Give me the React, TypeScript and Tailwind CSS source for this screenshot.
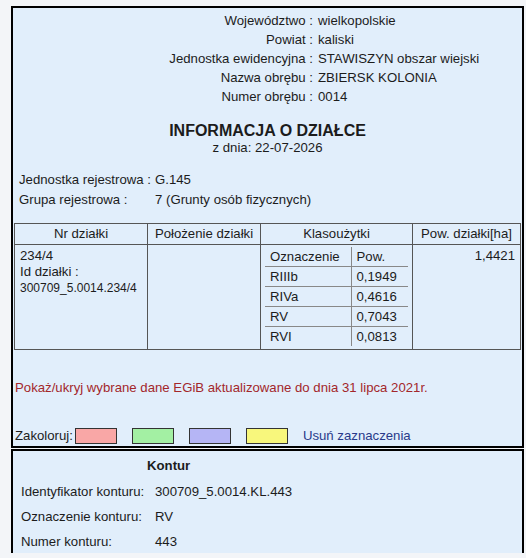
// Karta informacyjna działki ewidencyjnej z tabelą klasoużytków i konturem.
const header: [string, string][] = [
  ['Województwo', 'wielkopolskie'],
  ['Powiat', 'kaliski'],
  ['Jednostka ewidencyjna', 'STAWISZYN obszar wiejski'],
  ['Nazwa obrębu', 'ZBIERSK KOLONIA'],
  ['Numer obrębu', '0014'],
]

const klasouzytki: [string, string][] = [
  ['RIIIb', '0,1949'],
  ['RIVa', '0,4616'],
  ['RV', '0,7043'],
  ['RVI', '0,0813'],
]

const swatches = ['bg-[#f9a7a6]', 'bg-[#a3f0a3]', 'bg-[#b5b5f5]', 'bg-[#f8f77c]']

const kontur: [string, string][] = [
  ['Identyfikator konturu:', '300709_5.0014.KL.443'],
  ['Oznaczenie konturu:', 'RV'],
  ['Numer konturu:', '443'],
]

export default function App() {
  return (
    <div className="min-h-[558px] bg-[#f3f5f8] pl-[11px] pt-[6px] font-['Liberation_Sans',Arial,sans-serif] text-[13.2px] text-[#1c1c1c]">
      <section className="w-[513px] border-2 border-black bg-[#e1eefb] pb-[1px]">
        <div className="grid grid-cols-[300px_auto] gap-x-[5px] pt-[3px] leading-[19px]">
          {header.map(([label, value]) => (
            <div key={label} className="contents">
              <span className="text-right">{label} :</span>
              <span>{value}</span>
            </div>
          ))}
        </div>

        <div className="mt-[15px] text-center">
          <h2 className="text-[16px] font-bold leading-[19px]">INFORMACJA O DZIAŁCE</h2>
          <div className="leading-[16px]">z dnia: 22-07-2026</div>
        </div>

        <div className="mt-[14px] grid grid-cols-[136px_auto] pl-[6px] leading-[20px]">
          <span>Jednostka rejestrowa :</span>
          <span>G.145</span>
          <span>Grupa rejestrowa :</span>
          <span>7 (Grunty osób fizycznych)</span>
        </div>

        <table className="mt-[13px] ml-[1px] w-[507px] border-collapse border border-[#444] leading-[16px]">
          <thead>
            <tr className="h-[21px]">
              <th className="w-[133px] border border-[#555] font-normal">Nr działki</th>
              <th className="w-[113px] border border-[#555] font-normal">Położenie działki</th>
              <th className="w-[152px] border border-[#555] font-normal">Klasoużytki</th>
              <th className="border border-[#555] font-normal">Pow. działki[ha]</th>
            </tr>
          </thead>
          <tbody>
            <tr className="h-[105px] align-top">
              <td className="border border-[#555] px-[5px] pt-[3px]">
                <div>234/4</div>
                <div>Id działki :</div>
                <div className="text-[12px]">300709_5.0014.234/4</div>
              </td>
              <td className="border border-[#555]" />
              <td className="border border-[#555] px-[4px] pt-[2px] pb-[1px]">
                <table className="w-full border-collapse leading-[19px]">
                  <tbody>
                    <tr className="border-b border-[#888]">
                      <td className="w-[86px] border-r border-[#888] pl-[5px]">Oznaczenie</td>
                      <td className="pl-[5px]">Pow.</td>
                    </tr>
                    {klasouzytki.map(([ozn, pow], i) => (
                      <tr key={ozn} className={i < klasouzytki.length - 1 ? 'border-b border-[#888]' : ''}>
                        <td className="border-r border-[#888] pl-[5px]">{ozn}</td>
                        <td className="pl-[5px]">{pow}</td>
                      </tr>
                    ))}
                  </tbody>
                </table>
              </td>
              <td className="border border-[#555] px-[5px] pt-[3px] text-right">1,4421</td>
            </tr>
          </tbody>
        </table>

        <p className="mt-[29px] pl-[2px] leading-[18px] text-[#a3272b]">
          Pokaż/ukryj wybrane dane EGiB aktualizowane do dnia 31 lipca 2021r.
        </p>

        <div className="mt-[30px] flex items-center pl-[2px] leading-[18px]">
          <span className="mr-[2px]">Zakoloruj:</span>
          {swatches.map((c) => (
            <span key={c} className={`mr-[15px] h-[16px] w-[42px] border border-[#333] ${c}`} />
          ))}
          <span className="text-[#283a8a]">Usuń zaznaczenia</span>
        </div>
      </section>

      <section className="mt-px h-[104px] w-[513px] border-2 border-b-0 border-black bg-[#e1eefb]">
        <div className="pl-[134px] pt-[6px] font-bold leading-[18px]">Kontur</div>
        <div className="mt-[4px] grid grid-cols-[134px_auto] pl-[8px] leading-[25px]">
          {kontur.map(([label, value]) => (
            <div key={label} className="contents">
              <span>{label}</span>
              <span>{value}</span>
            </div>
          ))}
        </div>
      </section>
    </div>
  )
}
